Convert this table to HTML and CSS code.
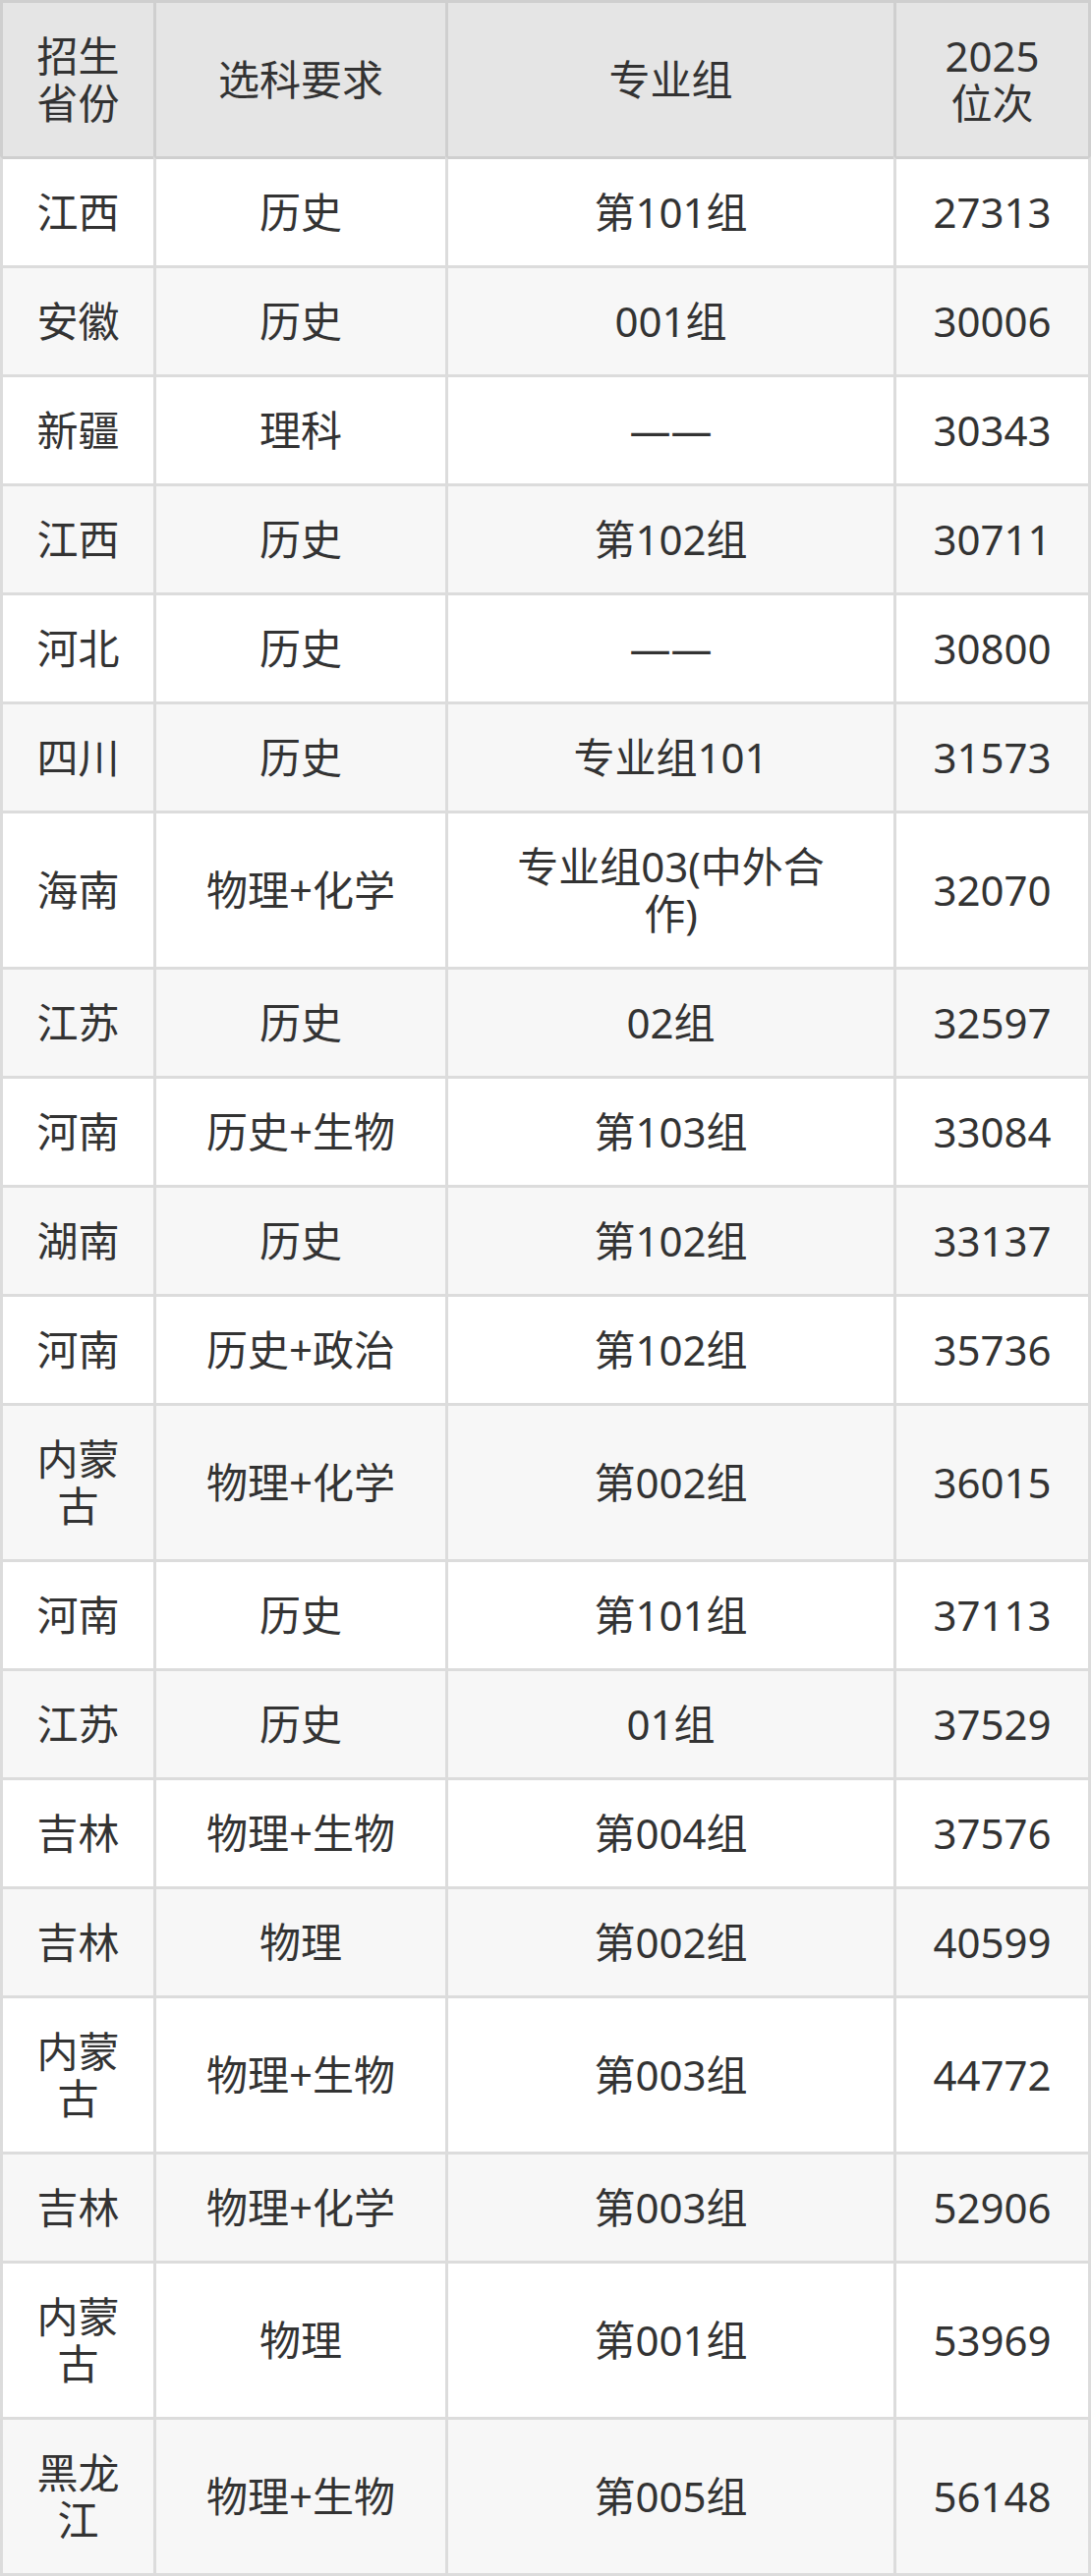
FILE: index.html
```html
<!DOCTYPE html>
<html lang="zh-CN">
<head>
<meta charset="utf-8">
<title>位次</title>
<link rel="stylesheet" href="styles.css">
</head>
<body>
<table class="rank-table">
  <colgroup>
    <col class="c-prov">
    <col class="c-subj">
    <col class="c-group">
    <col class="c-rank">
  </colgroup>
  <thead>
    <tr><th>招生省份</th><th>选科要求</th><th class="grp">专业组</th><th class="last">2025位次</th></tr>
  </thead>
  <tbody>
    <tr><td>江西</td><td>历史</td><td class="grp">第101组</td><td class="last">27313</td></tr>
    <tr><td>安徽</td><td>历史</td><td class="grp">001组</td><td class="last">30006</td></tr>
    <tr><td>新疆</td><td>理科</td><td class="grp">——</td><td class="last">30343</td></tr>
    <tr><td>江西</td><td>历史</td><td class="grp">第102组</td><td class="last">30711</td></tr>
    <tr><td>河北</td><td>历史</td><td class="grp">——</td><td class="last">30800</td></tr>
    <tr><td>四川</td><td>历史</td><td class="grp">专业组101</td><td class="last">31573</td></tr>
    <tr><td>海南</td><td>物理+化学</td><td class="grp">专业组03(中外合作)</td><td class="last">32070</td></tr>
    <tr><td>江苏</td><td>历史</td><td class="grp">02组</td><td class="last">32597</td></tr>
    <tr><td>河南</td><td>历史+生物</td><td class="grp">第103组</td><td class="last">33084</td></tr>
    <tr><td>湖南</td><td>历史</td><td class="grp">第102组</td><td class="last">33137</td></tr>
    <tr><td>河南</td><td>历史+政治</td><td class="grp">第102组</td><td class="last">35736</td></tr>
    <tr><td>内蒙古</td><td>物理+化学</td><td class="grp">第002组</td><td class="last">36015</td></tr>
    <tr><td>河南</td><td>历史</td><td class="grp">第101组</td><td class="last">37113</td></tr>
    <tr><td>江苏</td><td>历史</td><td class="grp">01组</td><td class="last">37529</td></tr>
    <tr><td>吉林</td><td>物理+生物</td><td class="grp">第004组</td><td class="last">37576</td></tr>
    <tr><td>吉林</td><td>物理</td><td class="grp">第002组</td><td class="last">40599</td></tr>
    <tr><td>内蒙古</td><td>物理+生物</td><td class="grp">第003组</td><td class="last">44772</td></tr>
    <tr><td>吉林</td><td>物理+化学</td><td class="grp">第003组</td><td class="last">52906</td></tr>
    <tr><td>内蒙古</td><td>物理</td><td class="grp">第001组</td><td class="last">53969</td></tr>
    <tr><td>黑龙江</td><td>物理+生物</td><td class="grp">第005组</td><td class="last">56148</td></tr>
  </tbody>
</table>
</body>
</html>
```
FILE: styles.css
```css
html, body {
  margin: 0;
  padding: 0;
  background: #ffffff;
}

.rank-table {
  width: 1110px;
  table-layout: fixed;
  border-collapse: separate;
  border-spacing: 0;
  font-family: "Noto Sans", "Noto Sans CJK SC", sans-serif;
  font-size: 42px;
  line-height: 48px;
  color: #333333;
}

.c-prov { width: 156px; }
.c-subj { width: 297px; }
.c-group { width: 456px; }
.c-rank { width: 201px; }

.rank-table th,
.rank-table td {
  box-sizing: border-box;
  padding: 30px 30px;
  text-align: center;
  vertical-align: middle;
  font-weight: normal;
  border-left: 3px solid #dcdcdc;
  border-top: 3px solid #dcdcdc;
}

.rank-table th.grp,
.rank-table td.grp {
  padding-left: 45px;
  padding-right: 45px;
}

.rank-table th {
  background: #e5e5e5;
  border-color: #cfcfcf;
}

.rank-table th.last,
.rank-table td.last {
  border-right: 3px solid #dcdcdc;
}

.rank-table th.last {
  border-right-color: #cfcfcf;
}

.rank-table tbody tr:first-child td {
  border-top-color: #cfcfcf;
}

.rank-table tbody tr:nth-child(even) td {
  background: #f7f7f7;
}

.rank-table tbody tr:last-child td {
  border-bottom: 3px solid #dcdcdc;
}
```
